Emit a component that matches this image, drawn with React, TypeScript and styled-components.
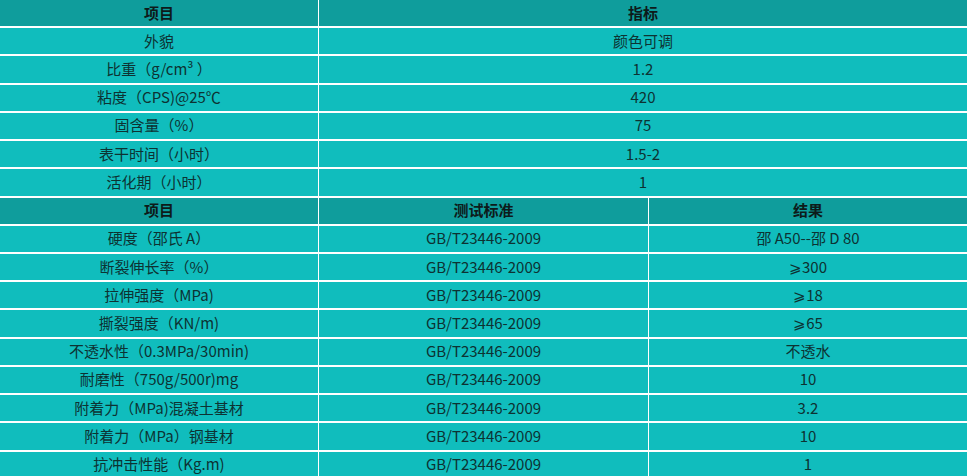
import React from "react";
import styled, { createGlobalStyle } from "styled-components";

const GlobalStyle = createGlobalStyle`
  html, body {
    margin: 0;
    padding: 0;
    background: #ffffff;
    overflow: hidden;
  }
  body {
    font-family: "Noto Sans CJK SC", "Noto Sans", sans-serif;
  }
`;

const Page = styled.div`
  width: 967px;
  height: 476px;
  overflow: hidden;
  background: #ffffff;
  display: flex;
  flex-direction: column;
`;

const Table = styled.div`
  display: flex;
  flex-direction: column;
`;

const Row = styled.div<{ $cols: string; $last?: boolean }>`
  display: grid;
  grid-template-columns: ${(p) => p.$cols};
  column-gap: 1px;
  background: #ffffff;
  padding-bottom: ${(p) => (p.$last ? "0" : "2px")};
`;

const Cell = styled.div<{ $head?: boolean }>`
  box-sizing: border-box;
  height: 26.22px;
  padding-bottom: 2px;
  display: flex;
  align-items: center;
  justify-content: center;
  background: ${(p) => (p.$head ? "#0f9d9c" : "#10bdbd")};
  color: ${(p) => (p.$head ? "#0d1a1a" : "#0d3232")};
  font-size: 15px;
  font-weight: ${(p) => (p.$head ? 700 : 400)};
  white-space: nowrap;
  line-height: 1;
`;

const cols1 = "318px 1fr";
const cols2 = "318px 329px 1fr";

const table1: [string, string][] = [
  ["外貌", "颜色可调"],
  ["比重（g/cm³ ）", "1.2"],
  ["粘度（CPS)@25℃", "420"],
  ["固含量（%）", "75"],
  ["表干时间（小时）", "1.5-2"],
  ["活化期（小时）", "1"],
];

const table2: [string, string, string][] = [
  ["硬度（邵氏 A）", "GB/T23446-2009", "邵 A50--邵 D 80"],
  ["断裂伸长率（%）", "GB/T23446-2009", "⩾300"],
  ["拉伸强度（MPa)", "GB/T23446-2009", "⩾18"],
  ["撕裂强度（KN/m)", "GB/T23446-2009", "⩾65"],
  ["不透水性（0.3MPa/30min)", "GB/T23446-2009", "不透水"],
  ["耐磨性（750g/500r)mg", "GB/T23446-2009", "10"],
  ["附着力（MPa)混凝土基材", "GB/T23446-2009", "3.2"],
  ["附着力（MPa）钢基材", "GB/T23446-2009", "10"],
  ["抗冲击性能（Kg.m)", "GB/T23446-2009", "1"],
];

export default function App() {
  return (
    <>
      <GlobalStyle />
      <Page>
        <Table>
          <Row $cols={cols1}>
            <Cell $head>项目</Cell>
            <Cell $head>指标</Cell>
          </Row>
          {table1.map(([a, b]) => (
            <Row $cols={cols1} key={a}>
              <Cell>{a}</Cell>
              <Cell>{b}</Cell>
            </Row>
          ))}
        </Table>
        <Table>
          <Row $cols={cols2}>
            <Cell $head>项目</Cell>
            <Cell $head>测试标准</Cell>
            <Cell $head>结果</Cell>
          </Row>
          {table2.map(([a, b, c], i) => (
            <Row $cols={cols2} key={a} $last={i === table2.length - 1}>
              <Cell>{a}</Cell>
              <Cell>{b}</Cell>
              <Cell>{c}</Cell>
            </Row>
          ))}
        </Table>
      </Page>
    </>
  );
}
